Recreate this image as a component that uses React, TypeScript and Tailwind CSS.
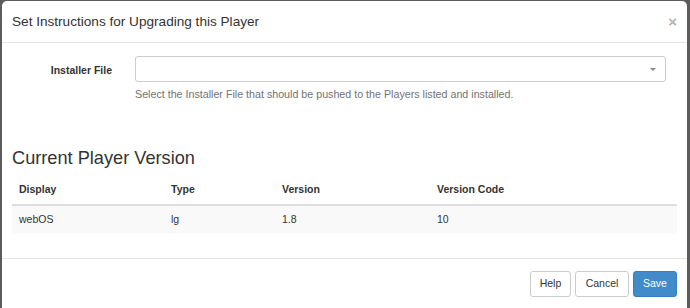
import React from "react";

export default function App() {
  return (
    <div
      className="w-[690px] h-[308px] bg-[#5c5c5c] pl-[2px] pt-[1px] pr-[3px] overflow-hidden"
      style={{ fontFamily: '"Liberation Sans", Arial, sans-serif' }}
    >
      <div className="bg-white rounded-t-[5px] h-[320px] flex flex-col">
        {/* Header */}
        <div className="h-[42px] border-b border-[#e5e5e5] flex items-center justify-between pl-[10px] pr-[10px]">
          <h4 className="text-[13.6px] text-[#333] leading-none">Set Instructions for Upgrading this Player</h4>
          <span className="text-[#b3b3b3] text-[15px] font-bold leading-none">×</span>
        </div>
        {/* Body */}
        <div className="px-[10px] pt-[13px]">
          <div className="flex items-start">
            <label className="w-[100px] text-right text-[10.5px] font-bold text-[#333] pt-[7px] shrink-0">
              Installer File
            </label>
            <div className="ml-[23px] w-[531px]">
              <div className="h-[26px] border border-[#ccc] rounded-[3px] flex items-center justify-end pr-[9px]">
                <span className="w-0 h-0 border-l-[3px] border-r-[3px] border-t-[3px] border-l-transparent border-r-transparent border-t-[#888]" />
              </div>
              <p className="text-[10.7px] text-[#737373] mt-[7px] leading-none">
                Select the Installer File that should be pushed to the Players listed and installed.
              </p>
            </div>
          </div>
          <h3 className="text-[18.2px] text-[#333] mt-[49px] leading-none">Current Player Version</h3>
          <table className="w-[665px] mt-[9px] text-[10.5px] text-[#333] border-collapse">
            <thead>
              <tr className="border-b-2 border-[#ddd]">
                <th className="text-left font-bold h-[29px] pl-[7px] w-[159px]">Display</th>
                <th className="text-left font-bold w-[111px]">Type</th>
                <th className="text-left font-bold w-[155px]">Version</th>
                <th className="text-left font-bold">Version Code</th>
              </tr>
            </thead>
            <tbody>
              <tr className="bg-[#f9f9f9]">
                <td className="h-[28px] pl-[7px]">webOS</td>
                <td>lg</td>
                <td>1.8</td>
                <td>10</td>
              </tr>
            </tbody>
          </table>
        </div>
        {/* Footer */}
        <div className="mt-[25px] border-t border-[#e5e5e5] flex justify-end gap-[4px] pr-[10px] pt-[12px]">
          <button className="h-[26px] w-[41px] border border-[#ccc] rounded-[3px] text-[10.5px] text-[#333] bg-white">Help</button>
          <button className="h-[26px] w-[54px] border border-[#ccc] rounded-[3px] text-[10.5px] text-[#333] bg-white">Cancel</button>
          <button className="h-[26px] w-[44px] border border-[#357ebd] rounded-[3px] text-[10.5px] text-white bg-[#428bca]">Save</button>
        </div>
      </div>
    </div>
  );
}
